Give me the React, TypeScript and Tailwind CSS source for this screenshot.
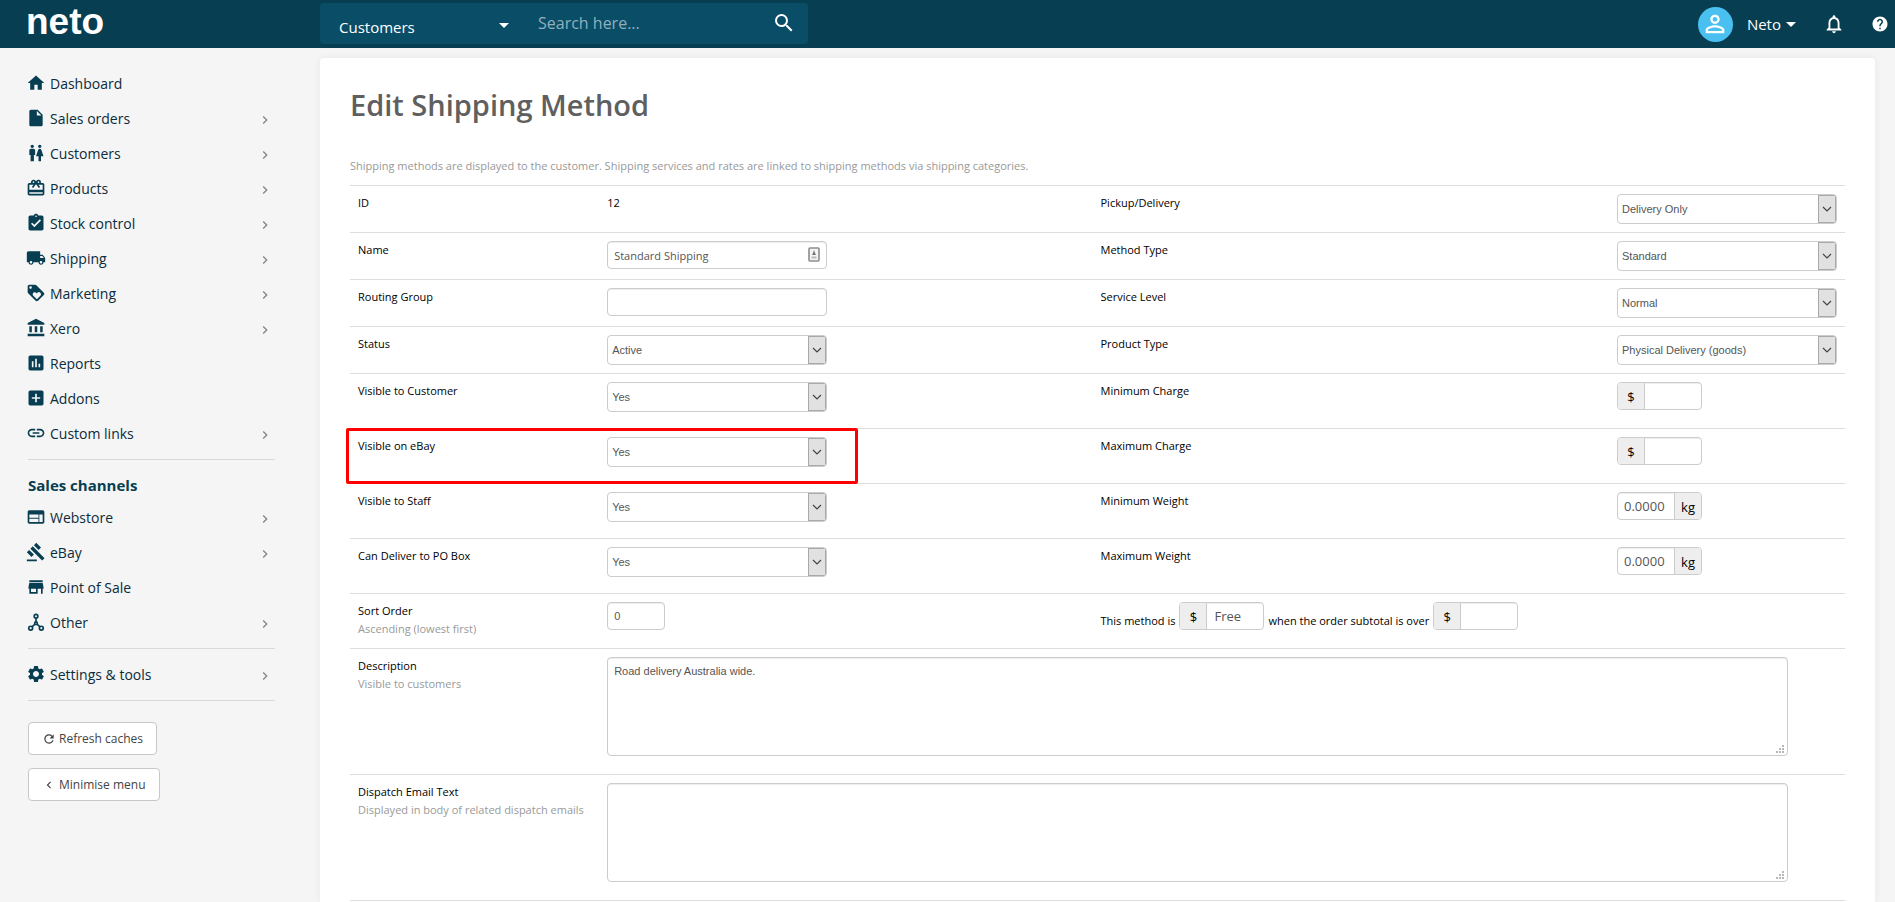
import React from 'react';
import {
    MdAccountBalance,
    MdAddBox,
    MdArrowDropDown,
    MdAssessment,
    MdAssignmentTurnedIn,
    MdCardGiftcard,
    MdChevronLeft,
    MdChevronRight,
    MdGavel,
    MdHelp,
    MdHome,
    MdInsertDriveFile,
    MdLink,
    MdLocalShipping,
    MdLoyalty,
    MdNotificationsNone,
    MdPersonOutline,
    MdRefresh,
    MdSearch,
    MdSettings,
    MdStore,
    MdWc,
    MdWeb,
} from 'react-icons/md';

type IconType = React.ComponentType<{ className?: string }>;
type NavEntry = { label: string; icon: IconType; expandable?: boolean };

const NodesIcon = ({ className }: { className?: string }) => (
    <svg viewBox="0 0 24 24" className={className} fill="none" stroke="currentColor" strokeWidth="2">
        <circle cx="12" cy="5" r="2.2" />
        <circle cx="12" cy="13.4" r="1.6" />
        <circle cx="5.6" cy="19.4" r="2.3" />
        <circle cx="18.4" cy="19.4" r="2.3" />
        <path d="M12 7.2v4.6M10.8 14.6l-3.6 3.2M13.2 14.6l3.6 3.2" />
    </svg>
);

const mainNav: NavEntry[] = [
    { label: 'Dashboard', icon: MdHome },
    { label: 'Sales orders', icon: MdInsertDriveFile, expandable: true },
    { label: 'Customers', icon: MdWc, expandable: true },
    { label: 'Products', icon: MdCardGiftcard, expandable: true },
    { label: 'Stock control', icon: MdAssignmentTurnedIn, expandable: true },
    { label: 'Shipping', icon: MdLocalShipping, expandable: true },
    { label: 'Marketing', icon: MdLoyalty, expandable: true },
    { label: 'Xero', icon: MdAccountBalance, expandable: true },
    { label: 'Reports', icon: MdAssessment },
    { label: 'Addons', icon: MdAddBox },
    { label: 'Custom links', icon: MdLink, expandable: true },
];

const channelNav: NavEntry[] = [
    { label: 'Webstore', icon: MdWeb, expandable: true },
    { label: 'eBay', icon: MdGavel, expandable: true },
    { label: 'Point of Sale', icon: MdStore },
    { label: 'Other', icon: NodesIcon, expandable: true },
];

const NavList = ({ items }: { items: NavEntry[] }) => (
    <ul>
        {items.map(({ label, icon: Icon, expandable }) => (
            <li key={label}>
                <a href="#" className="flex h-[35px] items-center text-sm text-[#0b2c3a]">
                    <Icon className="-ml-0.5 mb-0.5 mr-1 size-5 shrink-0 text-[#083e52]" />
                    <span className="flex-1">{label}</span>
                    {expandable && <MdChevronRight className="mr-0.5 mt-0.5 size-4 text-[#858585]" />}
                </a>
            </li>
        ))}
    </ul>
);

const Header = () => (
    <header className="flex h-12 items-center bg-[#083e52] text-white">
        <div className="w-80 shrink-0 pl-6">
            <a href="#" aria-label="neto" className="block">
                <svg viewBox="0 0 96 48" className="h-12 w-24" fill="#fff">
                    <text x="2" y="34" fontFamily="Liberation Sans, Arial, sans-serif" fontWeight="700" fontSize="37">neto</text>
                </svg>
            </a>
        </div>
        <form className="-mt-0.5 flex h-[41px] w-[488px] items-center rounded bg-[#0a4d67]">
            <div className="relative h-full w-[200px]">
                <select aria-label="Search in" className="h-full w-full appearance-none bg-transparent pl-[19px] pt-2 text-[15px] text-white outline-none">
                    <option>Customers</option>
                </select>
                <MdArrowDropDown className="pointer-events-none absolute right-1 top-2.5 size-6" />
            </div>
            <input aria-label="Search" placeholder="Search here..." className="min-w-0 flex-1 bg-transparent pl-[18px] text-base outline-none placeholder:text-[#8fb1be]" />
            <button type="button" aria-label="Search" className="mr-3">
                <MdSearch className="size-6" />
            </button>
        </form>
        <div className="ml-auto flex items-center pr-1.5">
            <span className="flex size-[35px] items-center justify-center rounded-full bg-[#49c0f0]">
                <MdPersonOutline className="size-7" />
            </span>
            <button type="button" className="ml-3.5 flex items-center text-[15px]">
                Neto
                <MdArrowDropDown className="-ml-0.5 size-6" />
            </button>
            <button type="button" aria-label="Notifications" className="ml-5">
                <MdNotificationsNone className="size-[22px]" />
            </button>
            <button type="button" aria-label="Help" className="ml-[26px]">
                <MdHelp className="size-[18px]" />
            </button>
        </div>
    </header>
);

const Sidebar = () => (
    <aside className="w-80 shrink-0 pb-6 pl-7 pr-[45px] pt-[18px]">
        <nav>
            <NavList items={mainNav} />
            <hr className="mt-2 border-[#d9d9d9]" />
            <h2 className="pb-[5px] pt-[15px] text-[15px] font-bold leading-5 text-[#083e52]">Sales channels</h2>
            <NavList items={channelNav} />
            <hr className="mt-2 border-[#d9d9d9]" />
            <div className="py-2">
                <NavList items={[{ label: 'Settings & tools', icon: MdSettings, expandable: true }]} />
            </div>
            <hr className="border-[#d9d9d9]" />
        </nav>
        <div className="mt-[21px] flex flex-col items-start gap-[13px]">
            <button type="button" className="flex h-[33px] items-center rounded border border-[#c8c8c8] bg-white px-[13px] text-xs text-[#444]">
                <MdRefresh className="mr-[3px] size-3.5" />
                Refresh caches
            </button>
            <button type="button" className="flex h-[33px] items-center rounded border border-[#c8c8c8] bg-white px-[13px] text-xs text-[#444]">
                <MdChevronLeft className="mr-[3px] size-3.5" />
                Minimise menu
            </button>
        </div>
    </aside>
);

const boxClass = 'border border-[#ccc] rounded bg-white text-[#555] outline-none shadow-[inset_0_1px_1px_rgba(0,0,0,0.075)]';

const Select = ({ id, value }: { id: string; value: string }) => (
    <div className="relative h-[30px] w-[220px] overflow-hidden rounded border border-[#ccc] bg-white">
        <select id={id} className="h-full w-full appearance-none bg-transparent pl-1 pr-5 font-['Liberation_Sans',Arial,sans-serif] text-[11px] text-[#555] outline-none">
            <option>{value}</option>
        </select>
        <span className="pointer-events-none absolute inset-y-0 right-0 flex w-[18px] items-center justify-center border border-[#a9a9a9] bg-[#e1e1e1]">
            <svg viewBox="0 0 10 6" className="h-1.5 w-2.5" fill="none" stroke="#444" strokeWidth="1.2">
                <path d="M1 1l4 4 4-4" />
            </svg>
        </span>
    </div>
);

const AddonInput = ({ id, label, prefix, suffix, value = '', pad = 'px-[7px]' }: { id: string; label?: string; prefix?: string; suffix?: string; value?: string; pad?: string }) => (
    <span className="flex h-7 w-[85px] overflow-hidden rounded border border-[#ccc] bg-white text-[13px]">
        {prefix && <span className="flex w-[27px] shrink-0 items-center justify-center border-r border-[#ccc] bg-[#eee] pt-0.5">{prefix}</span>}
        <input id={id} aria-label={label} defaultValue={value} className={`min-w-0 flex-1 ${pad} text-[#555] shadow-[inset_0_1px_1px_rgba(0,0,0,0.075)] outline-none`} />
        {suffix && <span className="flex w-[27px] shrink-0 items-center justify-center border-l border-[#ccc] bg-[#eee] pt-0.5">{suffix}</span>}
    </span>
);

const TextArea = ({ id, value = '' }: { id: string; value?: string }) => (
    <div className="relative mb-2.5 w-[96%]">
        <textarea id={id} defaultValue={value} className={`${boxClass} block h-[99px] w-full resize-none px-1.5 py-1 font-['Liberation_Sans',Arial,sans-serif] text-[11px] leading-[18px]`} />
        <svg viewBox="0 0 8 8" className="pointer-events-none absolute bottom-[3px] right-1 size-2" fill="#b8b8b8">
            <path d="M6 0h2v2H6zM3 3h2v2H3zM6 3h2v2H6zM0 6h2v2H0zM3 6h2v2H3zM6 6h2v2H6z" />
        </svg>
    </div>
);

const Cell = ({ children, colSpan }: { children?: React.ReactNode; colSpan?: number }) => (
    <td colSpan={colSpan} className="border-t border-[#ddd] p-2 align-top">{children}</td>
);

const LabelCell = ({ id, label, hint, marked }: { id?: string; label: string; hint?: string; marked?: boolean }) => (
    <th scope="row" className="relative border-t border-[#ddd] p-2 text-left align-top font-normal">
        <label htmlFor={id}>{label}</label>
        {hint && <div className="whitespace-nowrap text-[#999]">{hint}</div>}
        {marked && <span className="pointer-events-none absolute -left-1 -top-px z-10 h-14 w-[512px] rounded-xs border-3 border-[#fe0000]" />}
    </th>
);

const Row = ({ children, tall }: { children: React.ReactNode; tall?: boolean }) => (
    <tr className={tall ? 'h-[55px]' : 'h-[47px]'}>{children}</tr>
);

const ShippingForm = () => (
    <table className="w-full table-fixed border-separate border-spacing-0 border-b border-[#ddd] text-[11px] leading-[18px] text-black">
        <colgroup>
            <col className="w-1/6" />
            <col className="w-[33%]" />
            <col />
            <col className="w-[236px]" />
        </colgroup>
        <tbody>
            <Row>
                <LabelCell label="ID" />
                <Cell>12</Cell>
                <LabelCell id="pickup" label="Pickup/Delivery" />
                <Cell><Select id="pickup" value="Delivery Only" /></Cell>
            </Row>
            <Row>
                <LabelCell id="name" label="Name" />
                <Cell>
                    <div className="relative w-[220px]">
                        <input id="name" defaultValue="Standard Shipping" className={`${boxClass} block h-7 w-full pl-1.5 pr-7`} />
                        <svg viewBox="0 0 12 15" className="pointer-events-none absolute right-[7px] top-1.5 h-[15px] w-3" fill="none">
                            <rect x="1" y="1" width="10" height="13" rx="1" fill="#f4f4f4" stroke="#8c8c8c" strokeWidth="1.6" />
                            <path d="M6 3l1 3 1 2H4l1-2z" fill="#777" />
                            <path d="M3.5 9.5h5v2h-5z" fill="#bbb" />
                        </svg>
                    </div>
                </Cell>
                <LabelCell id="method-type" label="Method Type" />
                <Cell><Select id="method-type" value="Standard" /></Cell>
            </Row>
            <Row>
                <LabelCell id="routing" label="Routing Group" />
                <Cell><input id="routing" className={`${boxClass} block h-7 w-[220px] px-1.5`} /></Cell>
                <LabelCell id="service" label="Service Level" />
                <Cell><Select id="service" value="Normal" /></Cell>
            </Row>
            <Row>
                <LabelCell id="status" label="Status" />
                <Cell><Select id="status" value="Active" /></Cell>
                <LabelCell id="product-type" label="Product Type" />
                <Cell><Select id="product-type" value="Physical Delivery (goods)" /></Cell>
            </Row>
            <Row tall>
                <LabelCell id="visible-customer" label="Visible to Customer" />
                <Cell><Select id="visible-customer" value="Yes" /></Cell>
                <LabelCell id="min-charge" label="Minimum Charge" />
                <Cell><AddonInput id="min-charge" prefix="$" /></Cell>
            </Row>
            <Row tall>
                <LabelCell id="visible-ebay" label="Visible on eBay" marked />
                <Cell><Select id="visible-ebay" value="Yes" /></Cell>
                <LabelCell id="max-charge" label="Maximum Charge" />
                <Cell><AddonInput id="max-charge" prefix="$" /></Cell>
            </Row>
            <Row tall>
                <LabelCell id="visible-staff" label="Visible to Staff" />
                <Cell><Select id="visible-staff" value="Yes" /></Cell>
                <LabelCell id="min-weight" label="Minimum Weight" />
                <Cell><AddonInput id="min-weight" suffix="kg" value="0.0000" pad="px-1.5" /></Cell>
            </Row>
            <Row tall>
                <LabelCell id="po-box" label="Can Deliver to PO Box" />
                <Cell><Select id="po-box" value="Yes" /></Cell>
                <LabelCell id="max-weight" label="Maximum Weight" />
                <Cell><AddonInput id="max-weight" suffix="kg" value="0.0000" pad="px-1.5" /></Cell>
            </Row>
            <Row tall>
                <LabelCell id="sort" label="Sort Order" hint="Ascending (lowest first)" />
                <Cell>
                    <input id="sort" defaultValue="0" className={`${boxClass} block h-7 w-[58px] px-1.5 font-['Liberation_Sans',Arial,sans-serif]`} />
                </Cell>
                <Cell colSpan={2}>
                    <div className="flex items-end gap-1 whitespace-nowrap">
                        <span>This method is</span>
                        <AddonInput id="method-price" label="Method price" prefix="$" value="Free" />
                        <span>when the order subtotal is over</span>
                        <AddonInput id="subtotal" label="Order subtotal" prefix="$" />
                    </div>
                </Cell>
            </Row>
            <Row>
                <LabelCell id="description" label="Description" hint="Visible to customers" />
                <Cell colSpan={3}><TextArea id="description" value="Road delivery Australia wide." /></Cell>
            </Row>
            <Row>
                <LabelCell id="dispatch" label="Dispatch Email Text" hint="Displayed in body of related dispatch emails" />
                <Cell colSpan={3}><TextArea id="dispatch" /></Cell>
            </Row>
        </tbody>
    </table>
);

const App: React.FC = () => (
    <div className="flex min-h-screen flex-col bg-[#f5f5f5] font-['Open_Sans','Noto_Sans',sans-serif]">
        <Header />
        <div className="flex flex-1">
            <Sidebar />
            <main className="mr-5 mt-2.5 min-w-0 flex-1 rounded-t bg-white px-[30px] shadow-[0_0_8px_rgba(0,0,0,0.06)]">
                <h1 className="pt-[27px] text-[29px] font-semibold leading-10 text-[#5f5f5f]">Edit Shipping Method</h1>
                <p className="mb-2.5 mt-8 text-[11px] leading-[18px] text-[#999]">
                    Shipping methods are displayed to the customer. Shipping services and rates are linked to shipping methods via shipping categories.
                </p>
                <ShippingForm />
            </main>
        </div>
    </div>
);

export default App;
